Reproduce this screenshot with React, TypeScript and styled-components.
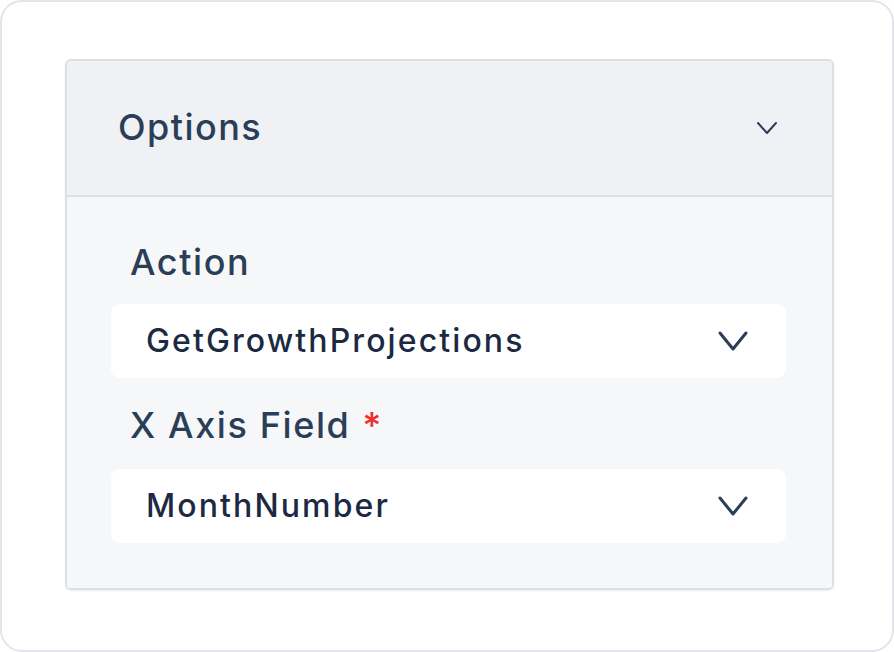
import React from "react";
import styled, { createGlobalStyle } from "styled-components";

const Global = createGlobalStyle`
  html, body { margin: 0; padding: 0; background: #ffffff; }
  body { font-family: Inter, "Noto Sans", "Liberation Sans", sans-serif; }
  * { box-sizing: border-box; }
`;

const Frame = styled.div`
  width: 894px;
  height: 652px;
  border: 2px solid #e2e5e9;
  border-radius: 22px;
  background: #ffffff;
  padding: 57px 0 0 63px;
`;

const Card = styled.section`
  width: 769px;
  border: 2px solid #dcdfe4;
  border-radius: 6px;
  overflow: hidden;
  box-shadow: 0 1px 2px rgba(30, 41, 59, 0.08);
`;

const Header = styled.div`
  height: 136px;
  background: #eff1f4;
  border-bottom: 2px solid #dcdfe4;
  display: flex;
  align-items: center;
  justify-content: space-between;
  padding: 0 54px 0 51px;
`;

const Title = styled.h2`
  margin: 0;
  font-size: 36px;
  font-weight: 500;
  letter-spacing: 1.45px;
  line-height: 1.2;
  color: #2b3e58;
`;

const Body = styled.div`
  background: #f6f7f9;
  padding: 44px 46px 45px 44px;
  display: flex;
  flex-direction: column;
`;

const Label = styled.label<{ $first?: boolean }>`
  display: block;
  margin: ${(p) => (p.$first ? "0" : "26px")} 0 ${(p) => (p.$first ? "20px" : "22px")} 19px;
  font-size: 36px;
  font-weight: 500;
  letter-spacing: 1.6px;
  line-height: 1.2;
  color: #2b3e58;
`;

const Required = styled.span`
  color: #ef2b2b;
  margin-left: 12px;
`;

const Select = styled.div`
  height: 74px;
  background: #ffffff;
  border-radius: 9px;
  display: flex;
  align-items: center;
  justify-content: space-between;
  padding: 0 37px 0 35px;
`;

const Value = styled.span`
  font-size: 32px;
  font-weight: 500;
  letter-spacing: 2.1px;
  line-height: 1.2;
  color: #1b2a42;
`;

const Chevron = ({ w, h, sw }: { w: number; h: number; sw: number }) => (
  <svg width={w} height={h} viewBox={`0 0 ${w} ${h}`} fill="none">
    <path
      d={`M${sw} ${sw} L${w / 2} ${h - sw} L${w - sw} ${sw}`}
      stroke="#2b3e58"
      strokeWidth={sw}
      strokeLinecap="round"
      strokeLinejoin="round"
    />
  </svg>
);

export default function App() {
  return (
    <>
      <Global />
      <Frame>
        <Card>
          <Header>
            <Title>Options</Title>
            <Chevron w={22} h={14} sw={2} />
          </Header>
          <Body>
            <Label $first>Action</Label>
            <Select>
              <Value>GetGrowthProjections</Value>
              <Chevron w={32} h={22} sw={3} />
            </Select>
            <Label>
              X Axis Field<Required>*</Required>
            </Label>
            <Select>
              <Value>MonthNumber</Value>
              <Chevron w={32} h={22} sw={3} />
            </Select>
          </Body>
        </Card>
      </Frame>
    </>
  );
}
